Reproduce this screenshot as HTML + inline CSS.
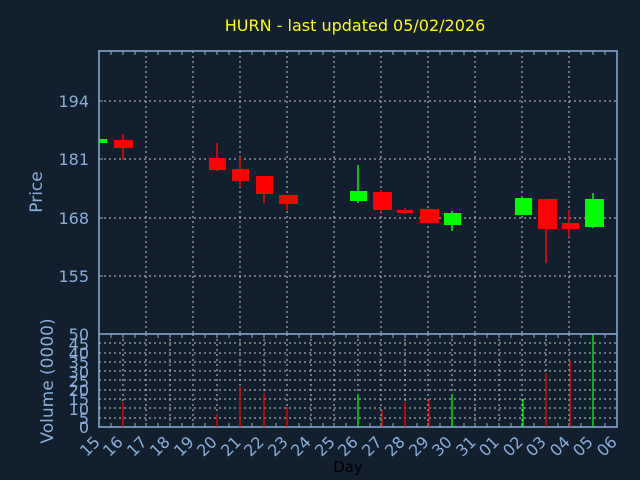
<!DOCTYPE html>
<html><head><style>html,body{margin:0;padding:0;background:#111f2f;}svg{display:block}</style></head><body>
<svg width="640" height="480" xmlns="http://www.w3.org/2000/svg" font-family="DejaVu Sans, Liberation Sans, sans-serif">
<rect width="640" height="480" fill="#111f2f"/>
<text x="355" y="31" fill="#ffff00" font-size="16" text-anchor="middle">HURN - last updated 05/02/2026</text>
<g stroke="#c8c8c8" stroke-dasharray="2,3" stroke-width="1">
<path d="M99 101H617M99 159H617M99 218H617M99 276H617"/>
<path d="M146 51V334M193 51V334M240 51V334M287 51V334M334 51V334M381 51V334M428 51V334M475 51V334M522 51V334M569 51V334"/>
<path d="M99 418H617M99 408H617M99 399H617M99 390H617M99 380H617M99 371H617M99 362H617M99 353H617M99 343H617"/>
<path d="M123 334V427M146 334V427M170 334V427M193 334V427M217 334V427M240 334V427M264 334V427M287 334V427M311 334V427M334 334V427M358 334V427M381 334V427M405 334V427M428 334V427M452 334V427M475 334V427M499 334V427M522 334V427M546 334V427M569 334V427M593 334V427"/>
</g>
<g fill="none" stroke="#8aaedc" stroke-width="1.5">
<path d="M99 51H617V427H99Z M99 334H617"/>
</g>
<g stroke="#8aaedc" stroke-width="1">
<path d="M111 51v4M123 51v4M135 51v4M158 51v4M170 51v4M182 51v4M205 51v4M217 51v4M229 51v4M252 51v4M264 51v4M276 51v4M299 51v4M311 51v4M323 51v4M346 51v4M358 51v4M370 51v4M393 51v4M405 51v4M417 51v4M440 51v4M452 51v4M464 51v4M487 51v4M499 51v4M511 51v4M534 51v4M546 51v4M558 51v4M581 51v4M593 51v4M605 51v4"/>
<path d="M111 334v4M123 334v4M135 334v4M158 334v4M170 334v4M182 334v4M205 334v4M217 334v4M229 334v4M252 334v4M264 334v4M276 334v4M299 334v4M311 334v4M323 334v4M346 334v4M358 334v4M370 334v4M393 334v4M405 334v4M417 334v4M440 334v4M452 334v4M464 334v4M487 334v4M499 334v4M511 334v4M534 334v4M546 334v4M558 334v4M581 334v4M593 334v4M605 334v4"/>
<path d="M111 427v-4M123 427v-4M135 427v-4M146 427v-4M158 427v-4M170 427v-4M182 427v-4M193 427v-4M205 427v-4M217 427v-4M229 427v-4M240 427v-4M252 427v-4M264 427v-4M276 427v-4M287 427v-4M299 427v-4M311 427v-4M323 427v-4M334 427v-4M346 427v-4M358 427v-4M370 427v-4M381 427v-4M393 427v-4M405 427v-4M417 427v-4M428 427v-4M440 427v-4M452 427v-4M464 427v-4M475 427v-4M487 427v-4M499 427v-4M511 427v-4M522 427v-4M534 427v-4M546 427v-4M558 427v-4M569 427v-4M581 427v-4M593 427v-4M605 427v-4"/>
<path d="M99 101h4M99 159h4M99 218h4M99 276h4"/>
</g>
<g fill="#8aaedc" font-size="16" text-anchor="end">
<text x="89" y="107">194</text><text x="89" y="165">181</text><text x="89" y="224">168</text><text x="89" y="282">155</text>
<text x="42" y="192" text-anchor="middle" transform="rotate(-90 42 192)" font-size="17">Price</text>
<text x="53" y="381" text-anchor="middle" transform="rotate(-90 53 381)" font-size="17">Volume (0000)</text>
<g font-size="16"><text x="89" y="340">50</text><text x="89" y="350">45</text><text x="89" y="359">40</text><text x="89" y="368">35</text><text x="89" y="378">30</text><text x="89" y="387">25</text><text x="89" y="396">20</text><text x="89" y="405">15</text><text x="89" y="415">10</text><text x="89" y="424">5</text><text x="89" y="433">0</text></g>
</g>
<g fill="#8aaedc" font-size="16">
<text transform="translate(101,443) rotate(-45)" text-anchor="end">15</text>
<text transform="translate(124,443) rotate(-45)" text-anchor="end">16</text>
<text transform="translate(148,443) rotate(-45)" text-anchor="end">17</text>
<text transform="translate(171,443) rotate(-45)" text-anchor="end">18</text>
<text transform="translate(195,443) rotate(-45)" text-anchor="end">19</text>
<text transform="translate(218,443) rotate(-45)" text-anchor="end">20</text>
<text transform="translate(242,443) rotate(-45)" text-anchor="end">21</text>
<text transform="translate(265,443) rotate(-45)" text-anchor="end">22</text>
<text transform="translate(289,443) rotate(-45)" text-anchor="end">23</text>
<text transform="translate(312,443) rotate(-45)" text-anchor="end">24</text>
<text transform="translate(336,443) rotate(-45)" text-anchor="end">25</text>
<text transform="translate(359,443) rotate(-45)" text-anchor="end">26</text>
<text transform="translate(383,443) rotate(-45)" text-anchor="end">27</text>
<text transform="translate(406,443) rotate(-45)" text-anchor="end">28</text>
<text transform="translate(430,443) rotate(-45)" text-anchor="end">29</text>
<text transform="translate(453,443) rotate(-45)" text-anchor="end">30</text>
<text transform="translate(477,443) rotate(-45)" text-anchor="end">31</text>
<text transform="translate(500,443) rotate(-45)" text-anchor="end">01</text>
<text transform="translate(524,443) rotate(-45)" text-anchor="end">02</text>
<text transform="translate(547,443) rotate(-45)" text-anchor="end">03</text>
<text transform="translate(571,443) rotate(-45)" text-anchor="end">04</text>
<text transform="translate(594,443) rotate(-45)" text-anchor="end">05</text>
<text transform="translate(618,443) rotate(-45)" text-anchor="end">06</text>
</g>
<text x="348" y="472" fill="#000" font-size="15" text-anchor="middle">Day</text>
<g stroke-width="1.5">
<path stroke="#ff0000" d="M123 134V160M217 143V171M240 157V187M264 176V203M287 195V210M381 190V212M405 208V214M546 199V263M569 210V237"/>
<path stroke="#00ff00" d="M358 165V203M452 211V231M593 193V228"/>
</g>
<g fill="#ff0000">
<rect x="114" y="140" width="19" height="8"/><rect x="209" y="158" width="17" height="12"/><rect x="232" y="169" width="17" height="12"/><rect x="256" y="176" width="17" height="18"/><rect x="279" y="195" width="19" height="9"/><rect x="373" y="192" width="19" height="18"/><rect x="397" y="210" width="16" height="3"/><rect x="420" y="209" width="19" height="14"/><rect x="538" y="199" width="19" height="30"/><rect x="562" y="223" width="17" height="6"/>
</g>
<g fill="#00ff00">
<rect x="99" y="139" width="8" height="4"/><rect x="350" y="191" width="17" height="10"/><rect x="444" y="213" width="17" height="12"/><rect x="515" y="198" width="17" height="17"/><rect x="585" y="199" width="19" height="28"/>
</g>
<g stroke-width="1.3">
<path stroke="#ff0000" d="M123 427V402M217 427V414M240 427V387M264 427V393M287 427V407M382 427V410M405 427V402M429 427V399M546 427V373M570 427V361"/>
<path stroke="#00ff00" d="M358 427V394M452 427V394M523 427V399M593 427V335"/>
</g>
</svg>
</body></html>
